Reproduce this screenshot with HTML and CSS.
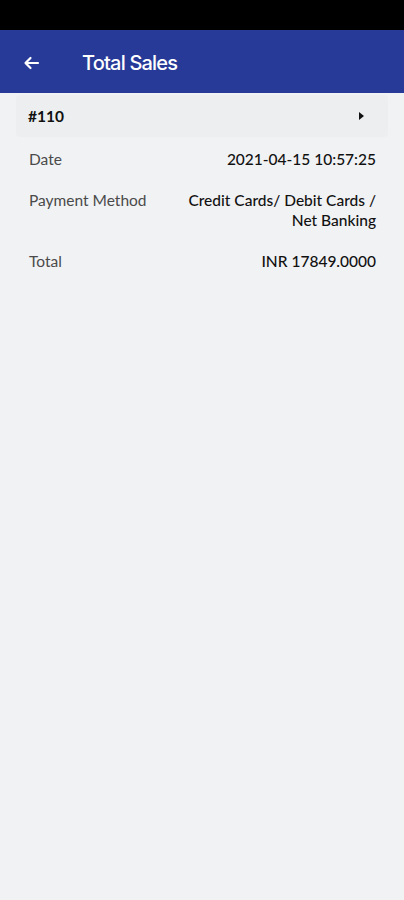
FILE: index.html
```html
<!DOCTYPE html>
<html lang="en">
<head>
    <meta charset="UTF-8">
    <meta name="viewport" content="width=device-width, initial-scale=1.0">
    <title>Total Sales</title>
    <link rel="stylesheet" href="styles.css">
</head>
<body>
    <div class="status-bar"></div>
    <header class="app-bar">
        <svg class="back" width="18" height="16" viewBox="0 0 18 16">
            <path d="M16 8H3.5M8.5 3L3.5 8l5 5" fill="none" stroke="#fff" stroke-width="2.2" stroke-linecap="round" stroke-linejoin="round"/>
        </svg>
        <h1>Total Sales</h1>
    </header>

    <div class="content">
        <div class="order-head">
            <span class="order-id">#110</span>
            <span class="caret"></span>
        </div>
        <div class="row">
            <span class="label">Date</span>
            <span class="value">2021-04-15 10:57:25</span>
        </div>
        <div class="row">
            <span class="label">Payment Method</span>
            <span class="value">Credit Cards/ Debit Cards /<br>Net Banking</span>
        </div>
        <div class="row">
            <span class="label">Total</span>
            <span class="value">INR 17849.0000</span>
        </div>
    </div>
</body>
</html>
```

FILE: styles.css
```css
body {
    margin: 0;
    font-family: Lato, "Liberation Sans", sans-serif;
    background-color: #f1f2f4;
    height: 900px;
}
.status-bar {
    height: 30px;
    background-color: #000;
}
.app-bar {
    height: 63px;
    box-sizing: border-box;
    padding: 2px 0 0 22px;
    background-color: #283a97;
    display: flex;
    align-items: center;
}
.app-bar .back {
    margin-right: 42px;
}
.app-bar h1 {
    margin: 0;
    color: #fff;
    font-family: Inter, "Liberation Sans", sans-serif;
    font-size: 20px;
    font-weight: 500;
    letter-spacing: -0.8px;
}
.content {
    padding: 2px 16px 0 16px;
}
.order-head {
    display: flex;
    justify-content: space-between;
    align-items: center;
    height: 42px;
    padding: 0 24px 0 12px;
    background-color: #eceef0;
    border-radius: 4px;
}
.order-id {
    font-size: 15.5px;
    font-weight: 700;
    color: #111;
}
.caret {
    width: 0;
    height: 0;
    border-top: 4px solid transparent;
    border-bottom: 4px solid transparent;
    border-left: 5px solid #111;
}
.row {
    display: flex;
    justify-content: space-between;
    padding: 12px 12px 9px 13px;
    font-size: 15.5px;
    line-height: 20px;
}
.row .label {
    color: #4a4a4a;
}
.row .value {
    color: #111;
    font-weight: 500;
    text-align: right;
}
```
